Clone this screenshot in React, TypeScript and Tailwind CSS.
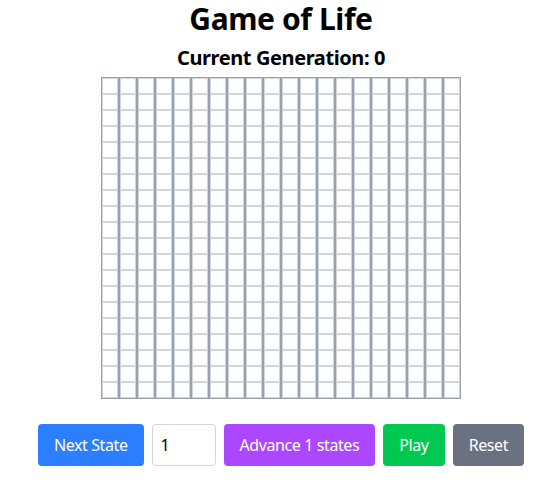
import React, { useState } from 'react';

const SIZE = 20;

export default function App() {
    const [generation] = useState(0);
    const [steps, setSteps] = useState('1');
    const grid = Array.from({ length: SIZE }, () => Array.from({ length: SIZE }, () => false));

    return (
        <div className="flex flex-col items-center pl-[7px] font-['Segoe_UI','Noto_Sans',sans-serif] tracking-tight text-black bg-white min-h-screen">
            <h1 className="text-3xl font-bold leading-9 pt-px">Game of Life</h1>
            <h2 className="text-xl font-bold mt-[7px] mb-[5px]">Current Generation: {generation}</h2>

            {/* board: columns of cells */}
            <div className="flex">
                {grid.map((col, x) => (
                    <div key={x} className="flex flex-col border border-gray-400">
                        {col.map((alive, y) => (
                            <div
                                key={y}
                                className={`w-4 h-4 border border-gray-300 ${alive ? 'bg-black' : 'bg-white'}`}
                            />
                        ))}
                    </div>
                ))}
            </div>

            <div className="flex gap-2 mt-[25px]">
                <button className="px-4 h-[42px] rounded bg-blue-500 text-white">Next State</button>
                <input
                    type="number"
                    value={steps}
                    onChange={(e) => setSteps(e.target.value)}
                    className="w-16 h-[42px] px-2 border border-gray-300 rounded text-black [appearance:textfield]"
                />
                <button className="px-4 h-[42px] rounded bg-purple-500 text-white">Advance {steps} states</button>
                <button className="px-4 h-[42px] rounded bg-green-500 text-white">Play</button>
                <button className="px-4 h-[42px] rounded bg-gray-500 text-white">Reset</button>
            </div>
        </div>
    );
}
